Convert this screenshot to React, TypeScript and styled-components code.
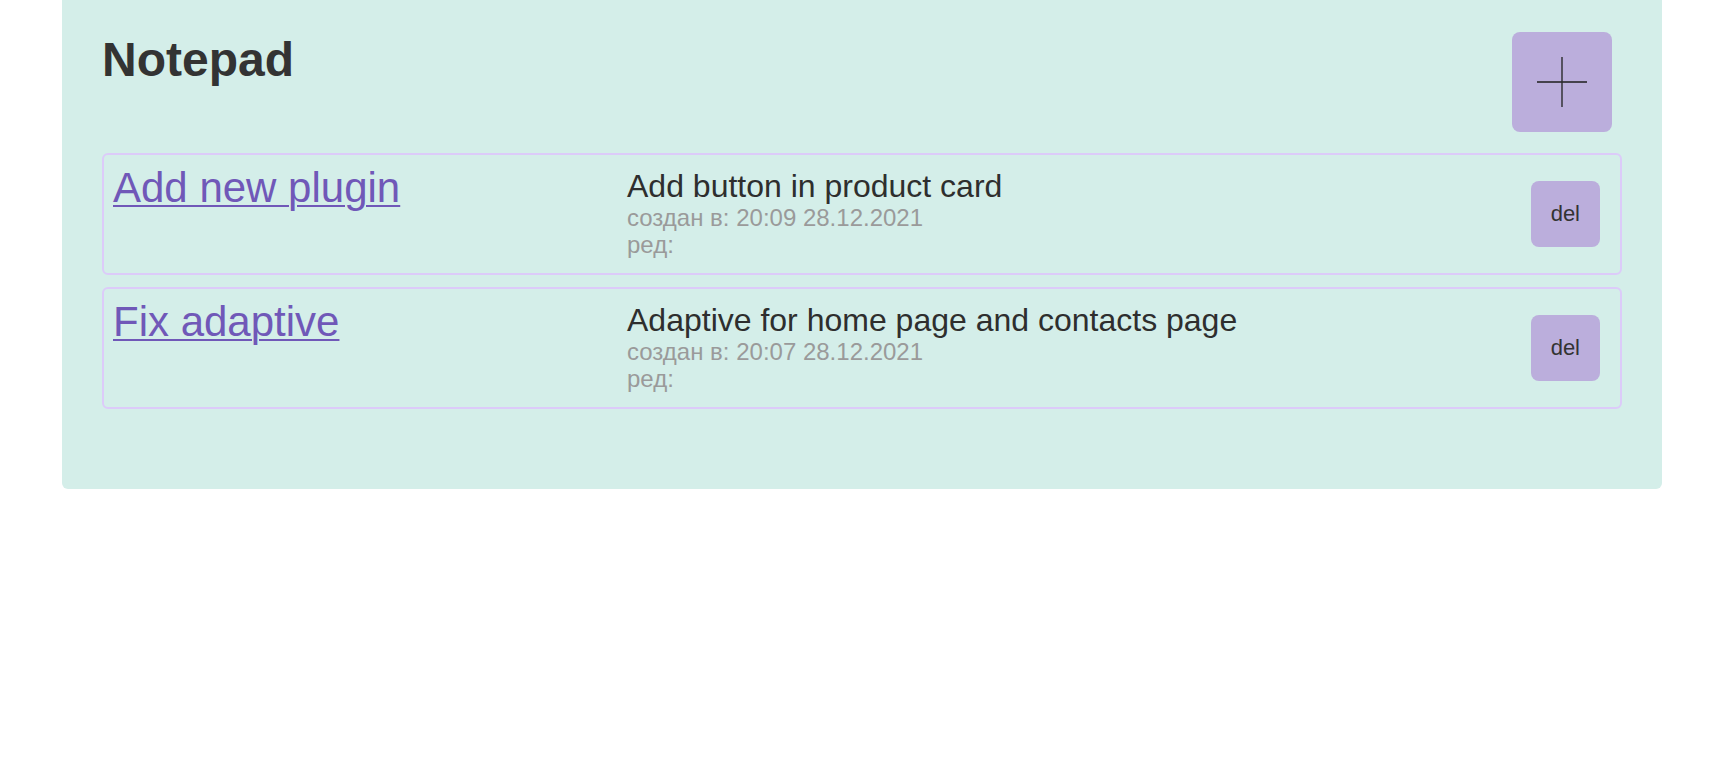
import React from "react";
import styled, { createGlobalStyle } from "styled-components";

const GlobalStyle = createGlobalStyle`
  html, body {
    margin: 0;
    padding: 0;
    background: #ffffff;
    font-family: "Liberation Sans", Arial, Helvetica, sans-serif;
    color: #333333;
  }
  * { box-sizing: border-box; }
`;

const Panel = styled.main`
  width: 1600px;
  margin-left: 62px;
  background: #d4eee9;
  border-radius: 0 0 6px 6px;
  padding: 32px 40px 80px 40px;
`;

const Header = styled.header`
  display: flex;
  justify-content: space-between;
  align-items: flex-start;
  margin-bottom: 21px;
`;

const Title = styled.h1`
  margin: 0;
  font-size: 48px;
  font-weight: 700;
  color: #333333;
  line-height: normal;
`;

const AddButton = styled.button`
  width: 100px;
  height: 100px;
  margin-right: 10px;
  border: none;
  border-radius: 8px;
  background: #bbaedc;
  display: flex;
  align-items: center;
  justify-content: center;
  padding: 0;
  cursor: pointer;
`;

const List = styled.div`
  display: flex;
  flex-direction: column;
  gap: 12px;
`;

const Card = styled.div`
  display: grid;
  grid-template-columns: 514px 1fr auto;
  align-items: center;
  border: 2px solid #dccbf9;
  border-radius: 6px;
  padding: 8px 20px 8px 9px;
`;

const TitleLink = styled.a`
  align-self: flex-start;
  justify-self: start;
  margin-top: 1px;
  font-size: 42px;
  color: #7058b8;
  text-decoration: underline;
  text-decoration-thickness: 2px;
  text-underline-offset: 3px;
  line-height: normal;
`;

const Body = styled.div`
  align-self: flex-start;
  display: flex;
  flex-direction: column;
  padding-top: 4px;
  padding-bottom: 7px;
`;

const Description = styled.p`
  margin: 0;
  font-size: 32px;
  color: #2e2e2e;
  line-height: 38px;
`;

const Meta = styled.span`
  font-size: 24px;
  color: #9a9a9a;
  line-height: 26.5px;
`;

const DelButton = styled.button`
  border: none;
  border-radius: 8px;
  background: #bbaedc;
  padding: 20px;
  font-family: "Liberation Sans", Arial, sans-serif;
  font-size: 22px;
  line-height: 26px;
  color: #333333;
  cursor: pointer;
`;

type Note = {
  title: string;
  text: string;
  created: string;
};

const notes: Note[] = [
  { title: "Add new plugin", text: "Add button in product card", created: "20:09 28.12.2021" },
  { title: "Fix adaptive", text: "Adaptive for home page and contacts page", created: "20:07 28.12.2021" },
];

const PlusIcon = () => (
  <svg width="50" height="50" viewBox="0 0 50 50" aria-hidden="true">
    <line x1="0" y1="25" x2="50" y2="25" stroke="#1e1e1e" strokeWidth="1.4" />
    <line x1="25" y1="0" x2="25" y2="50" stroke="#2a2a2a" strokeWidth="1.4" />
  </svg>
);

export default function App() {
  return (
    <>
      <GlobalStyle />
      <Panel>
        <Header>
          <Title>Notepad</Title>
          <AddButton aria-label="add">
            <PlusIcon />
          </AddButton>
        </Header>
        <List>
          {notes.map((n) => (
            <Card key={n.title}>
              <TitleLink href="#">{n.title}</TitleLink>
              <Body>
                <Description>{n.text}</Description>
                <Meta>создан в: {n.created}</Meta>
                <Meta>ред:</Meta>
              </Body>
              <DelButton>del</DelButton>
            </Card>
          ))}
        </List>
      </Panel>
    </>
  );
}
